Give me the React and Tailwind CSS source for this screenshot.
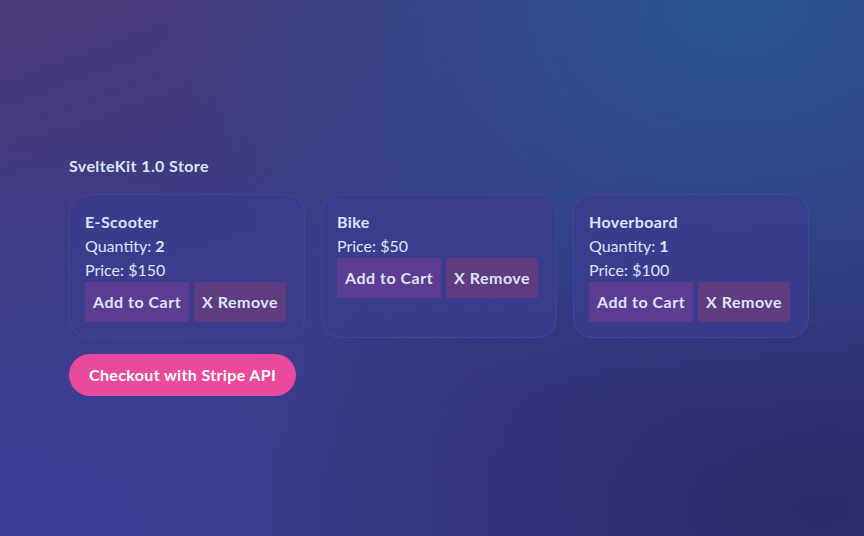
const products = [
  { name: "E-Scooter", quantity: 2, price: 150 },
  { name: "Bike", quantity: 0, price: 50 },
  { name: "Hoverboard", quantity: 1, price: 100 },
];

function ProductCard({ product }) {
  return (
    <div className="rounded-[20px] border border-[#4a4ca3]/60 bg-[#3b3c8e]/90 p-[15px] text-[#dbe5f6]">
      <h3 className="text-base font-bold leading-6 tracking-[0.4px]">{product.name}</h3>
      {product.quantity > 0 && (
        <p className="text-base leading-6">
          Quantity: <span className="font-bold">{product.quantity}</span>
        </p>
      )}
      <p className="text-base leading-6">Price: ${product.price}</p>
      <div className="flex gap-[5px]">
        <button className="bg-[#5d3c93] px-2 py-2 text-base font-bold leading-6 tracking-[0.5px] text-[#dbe5f6]">
          Add to Cart
        </button>
        <button className="bg-[#5f3b80] px-2 py-2 text-base font-bold leading-6 tracking-[0.5px] text-[#dbe5f6]">
          X Remove
        </button>
      </div>
    </div>
  );
}

export default function App() {
  return (
    <div
      className="min-h-[536px] w-full bg-[radial-gradient(ellipse_at_85%_0%,#2a5593_0%,transparent_55%),radial-gradient(ellipse_at_95%_95%,#2d2a68_0%,transparent_50%),radial-gradient(ellipse_at_0%_100%,#3f3f9a_0%,transparent_55%),linear-gradient(160deg,#4a3978_0%,#383b83_50%,#353583_100%)] pl-[69px] pt-[154px] font-['Lato','Noto_Sans',sans-serif]"
    >
      <h1 className="text-base font-bold leading-6 tracking-[0.4px] text-[#dbe5f6]">SvelteKit 1.0 Store</h1>
      <div className="mt-4 grid w-[740px] grid-cols-3 gap-4">
        {products.map((product) => (
          <ProductCard key={product.name} product={product} />
        ))}
      </div>
      <button className="mt-4 rounded-full bg-[#ea4a9b] px-5 py-[9px] text-base font-bold leading-6 tracking-[0.35px] text-white">
        Checkout with Stripe API
      </button>
    </div>
  );
}
